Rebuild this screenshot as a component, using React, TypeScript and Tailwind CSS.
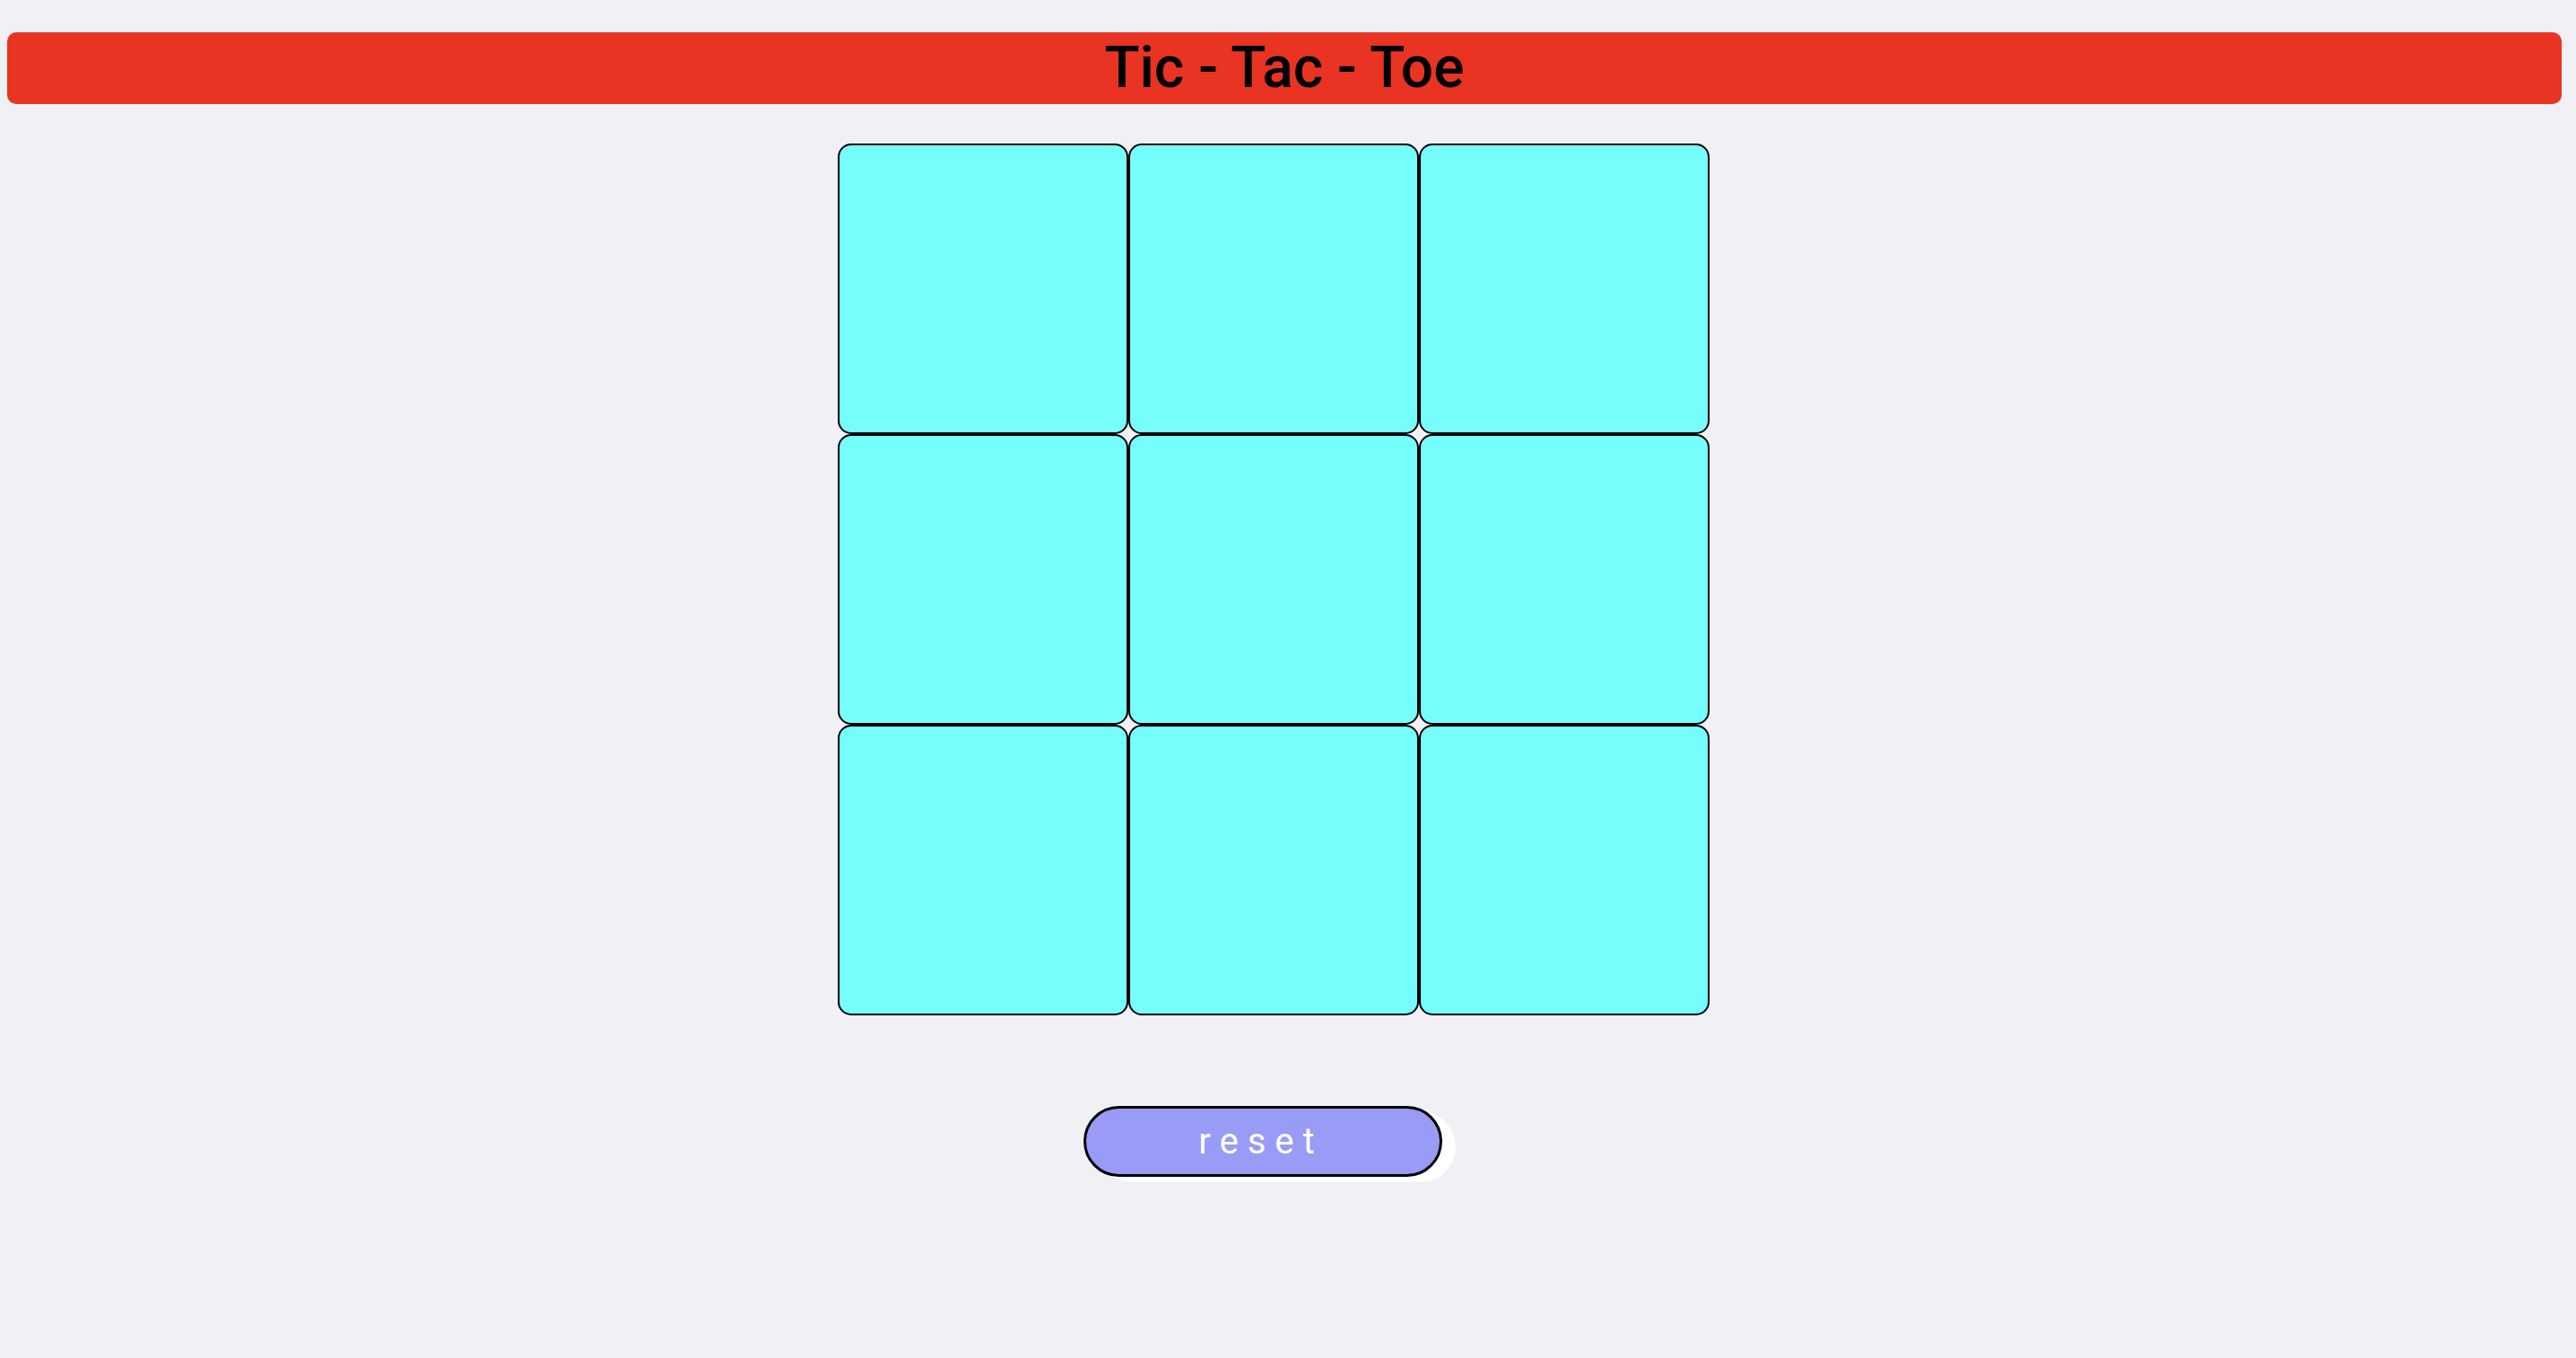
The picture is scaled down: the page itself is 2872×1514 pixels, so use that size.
import { useState } from "react";

type Cell = "X" | "O" | null;

export default function App() {
  const [cells, setCells] = useState<Cell[]>(Array(9).fill(null));
  const [turn, setTurn] = useState<"X" | "O">("X");

  const play = (i: number) => {
    if (cells[i]) return;
    const next = [...cells];
    next[i] = turn;
    setCells(next);
    setTurn(turn === "X" ? "O" : "X");
  };

  const reset = () => {
    setCells(Array(9).fill(null));
    setTurn("X");
  };

  return (
    <div className="min-h-[1514px] w-full bg-[#f0f0f5] pt-9 font-['Roboto',sans-serif]">
      <header className="ml-2 flex h-20 w-[2848px] items-center justify-center rounded-[10px] bg-[#e93323]">
        <h1 className="text-[64px] font-medium leading-none text-black">Tic - Tac - Toe</h1>
      </header>

      <main className="flex flex-col items-center pr-8 pt-11">
        <div className="grid grid-cols-[repeat(3,324px)] grid-rows-[repeat(3,324px)]">
          {cells.map((c, i) => (
            <button
              key={i}
              onClick={() => play(i)}
              className="rounded-[15px] border-2 border-black bg-[#76fefd] text-[160px] leading-none text-black"
            >
              {c}
            </button>
          ))}
        </div>

        <div className="mr-6 mt-[101px] flex justify-center">
          <button
            onClick={reset}
            className="h-[79px] w-[400px] rounded-full border-[3px] border-black bg-[#999bf7] pr-1 text-[40px] leading-none tracking-[10px] text-white shadow-[15px_6px_0_#ffffff]"
          >
            reset
          </button>
        </div>
      </main>
    </div>
  );
}
